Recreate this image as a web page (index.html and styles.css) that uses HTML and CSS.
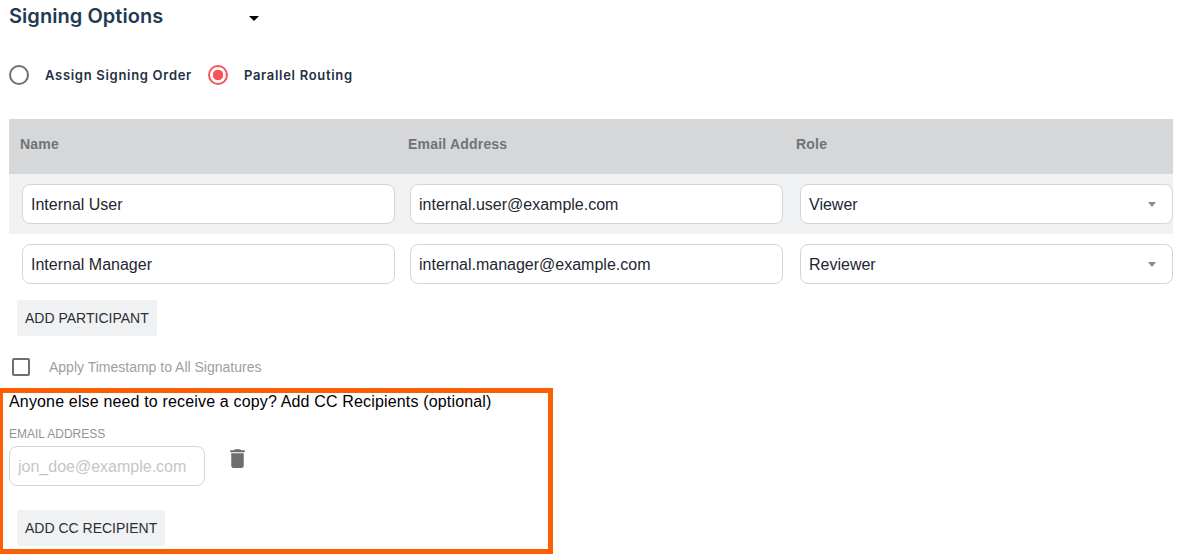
FILE: index.html
```html
<!DOCTYPE html>
<html lang="en">
<head>
    <meta charset="UTF-8">
    <title>Signing Options</title>
    <link rel="stylesheet" href="styles.css">
</head>
<body>
    <div class="title-row">
        <h2>Signing Options</h2>
        <span class="title-caret"></span>
    </div>

    <div class="radio-row">
        <label class="radio-option"><span class="radio"></span>Assign Signing Order</label>
        <label class="radio-option"><span class="radio checked"></span>Parallel Routing</label>
    </div>

    <div class="table-head">
        <div>Name</div>
        <div>Email Address</div>
        <div>Role</div>
    </div>
    <div class="table-row shaded">
        <input class="field" value="Internal User">
        <input class="field" value="internal.user@example.com">
        <div class="field select">Viewer<span class="select-caret"></span></div>
    </div>
    <div class="table-row">
        <input class="field" value="Internal Manager">
        <input class="field" value="internal.manager@example.com">
        <div class="field select">Reviewer<span class="select-caret"></span></div>
    </div>

    <button class="add-button participant">ADD PARTICIPANT</button>

    <label class="timestamp"><span class="checkbox"></span>Apply Timestamp to All Signatures</label>

    <div class="cc-box">
        <div class="cc-title">Anyone else need to receive a copy? Add CC Recipients (optional)</div>
        <div class="cc-label">EMAIL ADDRESS</div>
        <div class="cc-row">
            <input class="field cc-input" placeholder="jon_doe@example.com">
            <svg class="trash" viewBox="0 0 24 24" width="25" height="25"><path d="M6 19c0 1.1.9 2 2 2h8c1.1 0 2-.9 2-2V7H6v12zM19 4h-3.5l-1-1h-5l-1 1H5v2h14V4z"/></svg>
        </div>
        <button class="add-button">ADD CC RECIPIENT</button>
    </div>
</body>
</html>
```

FILE: styles.css
```css
body {
    margin: 0;
    padding: 0 4px 0 9px;
    font-family: 'Liberation Sans', Arial, sans-serif;
    background: #fff;
    color: #1d2733;
    overflow: hidden;
}
.title-row {
    display: flex;
    align-items: center;
    height: 32px;
}
h2 {
    width: 240px;
    margin: 0;
    font-family: 'Inter', sans-serif;
    font-size: 20px;
    font-weight: 600;
    letter-spacing: 0.05px;
    color: #1f3a52;
}
.title-caret {
    margin-top: 5px;
    border-top: 5px solid #000;
    border-left: 5px solid transparent;
    border-right: 5px solid transparent;
}
.radio-row {
    display: flex;
    margin-top: 33px;
    height: 20px;
}
.radio-option {
    display: flex;
    align-items: center;
    margin-right: 16px;
    font-family: 'Inter', sans-serif;
    font-size: 13px;
    font-weight: 600;
    letter-spacing: 0.7px;
    color: #1f3044;
}
.radio {
    box-sizing: border-box;
    width: 20px;
    height: 20px;
    margin-right: 16px;
    border: 2px solid #6f6f6f;
    border-radius: 50%;
}
.radio.checked {
    border-color: #f9545b;
    background: radial-gradient(circle, #f9545b 0 5px, transparent 5.5px);
}
.table-head {
    display: grid;
    grid-template-columns: 388px 388px 1fr;
    align-items: center;
    box-sizing: border-box;
    height: 55px;
    margin-top: 34px;
    padding: 0 0 5px 11px;
    background: #d6d7d9;
    font-size: 14px;
    font-weight: 700;
    letter-spacing: 0.2px;
    color: #6f7377;
}
.table-row {
    display: grid;
    grid-template-columns: 388px 390px 373px;
    align-items: center;
    height: 60px;
    padding-left: 13px;
}
.shaded {
    background: #f0f1f3;
}
.field {
    box-sizing: border-box;
    width: 373px;
    height: 40px;
    padding: 2px 8px 0;
    border: 1px solid #d4d5d7;
    border-radius: 8px;
    background: #fff;
    font-family: 'Liberation Sans', Arial, sans-serif;
    font-size: 16px;
    color: #1d2733;
}
.select {
    display: flex;
    align-items: center;
    justify-content: space-between;
}
.select-caret {
    margin: -2px 8px 0 0;
    border-top: 5px solid #8c8c8c;
    border-left: 4px solid transparent;
    border-right: 4px solid transparent;
}
.add-button {
    display: block;
    height: 36px;
    padding: 0 8px;
    border: none;
    border-radius: 3px;
    background: #f0f1f3;
    font-family: 'Liberation Sans', Arial, sans-serif;
    font-size: 14px;
    color: #2b2f33;
}
.participant {
    margin: 6px 0 0 8px;
}
.timestamp {
    display: flex;
    align-items: center;
    height: 18px;
    margin: 22px 0 0 3px;
    font-size: 14px;
    color: #9aa0a6;
}
.checkbox {
    box-sizing: border-box;
    width: 18px;
    height: 18px;
    margin-right: 19px;
    border: 2px solid #6f6f6f;
    border-radius: 2px;
}
.cc-box {
    box-sizing: border-box;
    width: 555px;
    height: 166px;
    margin: 12px 0 0 -11px;
    padding: 0 0 0 6px;
    border: 5px solid #ff5f03;
}
.cc-title {
    font-size: 16px;
    line-height: 18px;
    letter-spacing: 0.16px;
    color: #000;
}
.cc-label {
    margin-top: 16px;
    font-size: 12px;
    line-height: 14px;
    color: #8f9499;
}
.cc-row {
    display: flex;
    align-items: flex-start;
    margin-top: 5px;
}
.cc-input {
    width: 196px;
}
.cc-input::placeholder {
    color: #c4c6c8;
}
.trash {
    margin-left: 20px;
    fill: #6e6e6e;
}
.cc-box .add-button {
    margin: 24px 0 0 8px;
}
```
